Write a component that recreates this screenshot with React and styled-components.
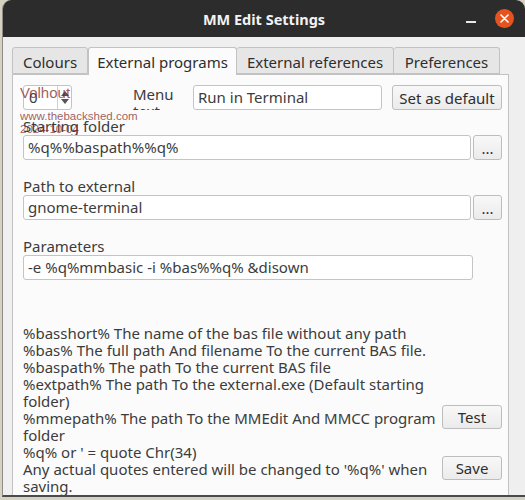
import React from "react";
import styled, { createGlobalStyle } from "styled-components";

const GlobalStyle = createGlobalStyle`
  html, body {
    margin: 0;
    padding: 0;
    background: #d6d2c2;
    overflow: hidden;
  }
  body {
    font-family: "Noto Sans", "DejaVu Sans", sans-serif;
    color: #3c3c3c;
  }
`;

const Window = styled.div`
  margin-left: 2px;
  width: 523px;
  height: 497px;
  background: #efefef;
  border-left: 1px solid #8e8c86;
  border-bottom: 2px solid #4a4a4a;
  border-radius: 9px 9px 0 0;
  overflow: hidden;
  box-sizing: border-box;
  position: relative;
`;

const TitleBar = styled.div`
  height: 37px;
  background: #2c2c2c;
  display: grid;
  grid-template-columns: 1fr auto 1fr;
  align-items: center;
`;

const Title = styled.div`
  grid-column: 2;
  color: #f2f2f2;
  font-weight: 700;
  font-size: 14.5px;
`;

const Controls = styled.div`
  grid-column: 3;
  display: flex;
  justify-content: flex-end;
  align-items: center;
  gap: 19px;
  padding-right: 11px;
`;

const MinBtn = styled.div`
  width: 10px;
  height: 2px;
  background: #e8e8e8;
  margin-top: 7px;
`;

const CloseBtn = styled.div`
  width: 19px;
  height: 19px;
  border-radius: 50%;
  background: #e5541e;
  display: flex;
  align-items: center;
  justify-content: center;
`;

const Body = styled.div`
  padding: 9px 0 0 9px;
`;

const Tabs = styled.div`
  display: flex;
  align-items: flex-end;
  height: 28px;
  position: relative;
  z-index: 1;
`;

const Tab = styled.div`
  box-sizing: border-box;
  width: ${(p) => p.w}px;
  height: ${(p) => (p.active ? 28 : 27)}px;
  margin-bottom: ${(p) => (p.active ? -1 : 0)}px;
  background: ${(p) => (p.active ? "#fbfbfb" : "#e6e6e6")};
  border: 1px solid #c2c2c2;
  border-bottom: ${(p) => (p.active ? "none" : "1px solid #c2c2c2")};
  border-left: ${(p) => (p.first || p.active ? "1px solid #c2c2c2" : "none")};
  border-radius: 3px 3px 0 0;
  font-size: 15px;
  display: flex;
  align-items: center;
  justify-content: center;
  color: #2e2e2e;
  padding-top: ${(p) => (p.active ? 0 : 2)}px;
`;

const Panel = styled.div`
  box-sizing: border-box;
  width: 497px;
  height: 440px;
  background: #fbfbfb;
  border: 1px solid #c2c2c2;
  padding: 10px 6px 0 10px;
  font-size: 15px;
`;

const TopRow = styled.div`
  display: flex;
  align-items: flex-start;
  height: 25px;
`;

const Spin = styled.div`
  box-sizing: border-box;
  width: 49px;
  height: 25px;
  background: #fff;
  border: 1px solid #c4c4c4;
  border-radius: 3px;
  display: flex;
`;

const SpinValue = styled.div`
  flex: 1;
  padding-left: 5px;
  line-height: 23px;
`;

const SpinArrows = styled.div`
  width: 13px;
  border-left: 1px solid #d0d0d0;
  display: flex;
  flex-direction: column;
  align-items: center;
  justify-content: center;
  gap: 3px;
`;

const Arrow = styled.div`
  width: 0;
  height: 0;
  border-left: 4px solid transparent;
  border-right: 4px solid transparent;
  ${(p) => (p.up ? "border-bottom" : "border-top")}: 5px solid #555;
`;

const MenuLabel = styled.div`
  width: 60px;
  height: 25px;
  margin-left: 61px;
  overflow: hidden;
  line-height: 17px;
  padding-top: 1px;
  box-sizing: border-box;
`;

const Input = styled.div`
  box-sizing: border-box;
  width: ${(p) => p.w}px;
  height: 25px;
  background: #fff;
  border: 1px solid #c4c4c4;
  border-radius: 3px;
  padding-left: 4px;
  line-height: 23px;
  white-space: nowrap;
  overflow: hidden;
`;

const Button = styled.div`
  box-sizing: border-box;
  width: ${(p) => p.w}px;
  height: ${(p) => p.h || 25}px;
  margin-left: ${(p) => p.ml || 0}px;
  border: 1px solid #bdbdbd;
  border-radius: 3px;
  background: linear-gradient(#f8f8f8, #ebebeb);
  display: flex;
  align-items: center;
  justify-content: center;
  color: #2e2e2e;
  font-size: 15px;
`;

const Label = styled.div`
  margin-top: ${(p) => p.mt}px;
  height: 18px;
  line-height: 18px;
`;

const Field = styled.div`
  display: flex;
  gap: 2px;
`;

const Help = styled.div`
  margin-top: 45px;
  display: grid;
  grid-template-columns: 1fr 60px;
`;

const HelpText = styled.div`
  line-height: 17px;
  white-space: nowrap;
`;

const HelpButtons = styled.div`
  display: flex;
  flex-direction: column;
  gap: 27px;
  padding-top: 80px;
`;

const Watermark = styled.div`
  position: absolute;
  left: 17px;
  top: 84px;
  color: rgba(128, 40, 40, 0.75);
  font-family: "Liberation Sans", Arial, sans-serif;
  pointer-events: none;
`;

const WmName = styled.div`
  font-size: 15px;
  line-height: 17px;
`;

const WmSmall = styled.div`
  font-size: 11.5px;
  line-height: 13px;
  margin-top: ${(p) => p.mt || 0}px;
`;

const helpLines = [
  "%basshort% The name of the bas file without any path",
  "%bas% The full path And filename To the current BAS file.",
  "%baspath% The path To the current BAS file",
  "%extpath% The path To the external.exe (Default starting",
  "folder)",
  "%mmepath% The path To the MMEdit And MMCC program",
  "folder",
  "%q% or ' = quote Chr(34)",
  "Any actual quotes entered will be changed to '%q%' when",
  "saving.",
  "The values will be expanded when the program is run.",
];

const tabs = [
  { name: "Colours", w: 76 },
  { name: "External programs", w: 149 },
  { name: "External references", w: 157 },
  { name: "Preferences", w: 106 },
];

export default function App() {
  return (
    <>
      <GlobalStyle />
      <Window>
        <TitleBar>
          <Title>MM Edit Settings</Title>
          <Controls>
            <MinBtn />
            <CloseBtn>
              <svg width="9" height="9" viewBox="0 0 9 9">
                <path d="M1 1L8 8M8 1L1 8" stroke="#fff" strokeWidth="1.6" strokeLinecap="round" />
              </svg>
            </CloseBtn>
          </Controls>
        </TitleBar>
        <Body>
          <Tabs>
            {tabs.map((t, i) => (
              <Tab key={t.name} w={t.w} first={i === 0} active={i === 1}>
                {t.name}
              </Tab>
            ))}
          </Tabs>
          <Panel>
            <TopRow>
              <Spin>
                <SpinValue>0</SpinValue>
                <SpinArrows>
                  <Arrow up />
                  <Arrow />
                </SpinArrows>
              </Spin>
              <MenuLabel>
                Menu
                <br />
                text
              </MenuLabel>
              <Input w={189}>Run in Terminal</Input>
              <Button w={110} ml={10}>Set as default</Button>
            </TopRow>

            <Label mt={7}>Starting folder</Label>
            <Field>
              <Input w={450}>%q%%baspath%%q%</Input>
              <Button w={29}>...</Button>
            </Field>

            <Label mt={17}>Path to external</Label>
            <Field>
              <Input w={450}>gnome-terminal</Input>
              <Button w={29}>...</Button>
            </Field>

            <Label mt={17}>Parameters</Label>
            <Field>
              <Input w={450}>-e %q%mmbasic -i %bas%%q% &amp;disown</Input>
            </Field>

            <Help>
              <HelpText>
                {helpLines.map((l, i) => (
                  <div key={i}>{l}</div>
                ))}
              </HelpText>
              <HelpButtons>
                <Button w={60} h={24}>Test</Button>
                <Button w={60} h={24}>Save</Button>
              </HelpButtons>
            </Help>
          </Panel>
        </Body>
        <Watermark>
          <WmName>Volhout</WmName>
          <WmSmall mt={9}>www.thebackshed.com</WmSmall>
          <WmSmall>2024-10-04</WmSmall>
        </Watermark>
      </Window>
    </>
  );
}
